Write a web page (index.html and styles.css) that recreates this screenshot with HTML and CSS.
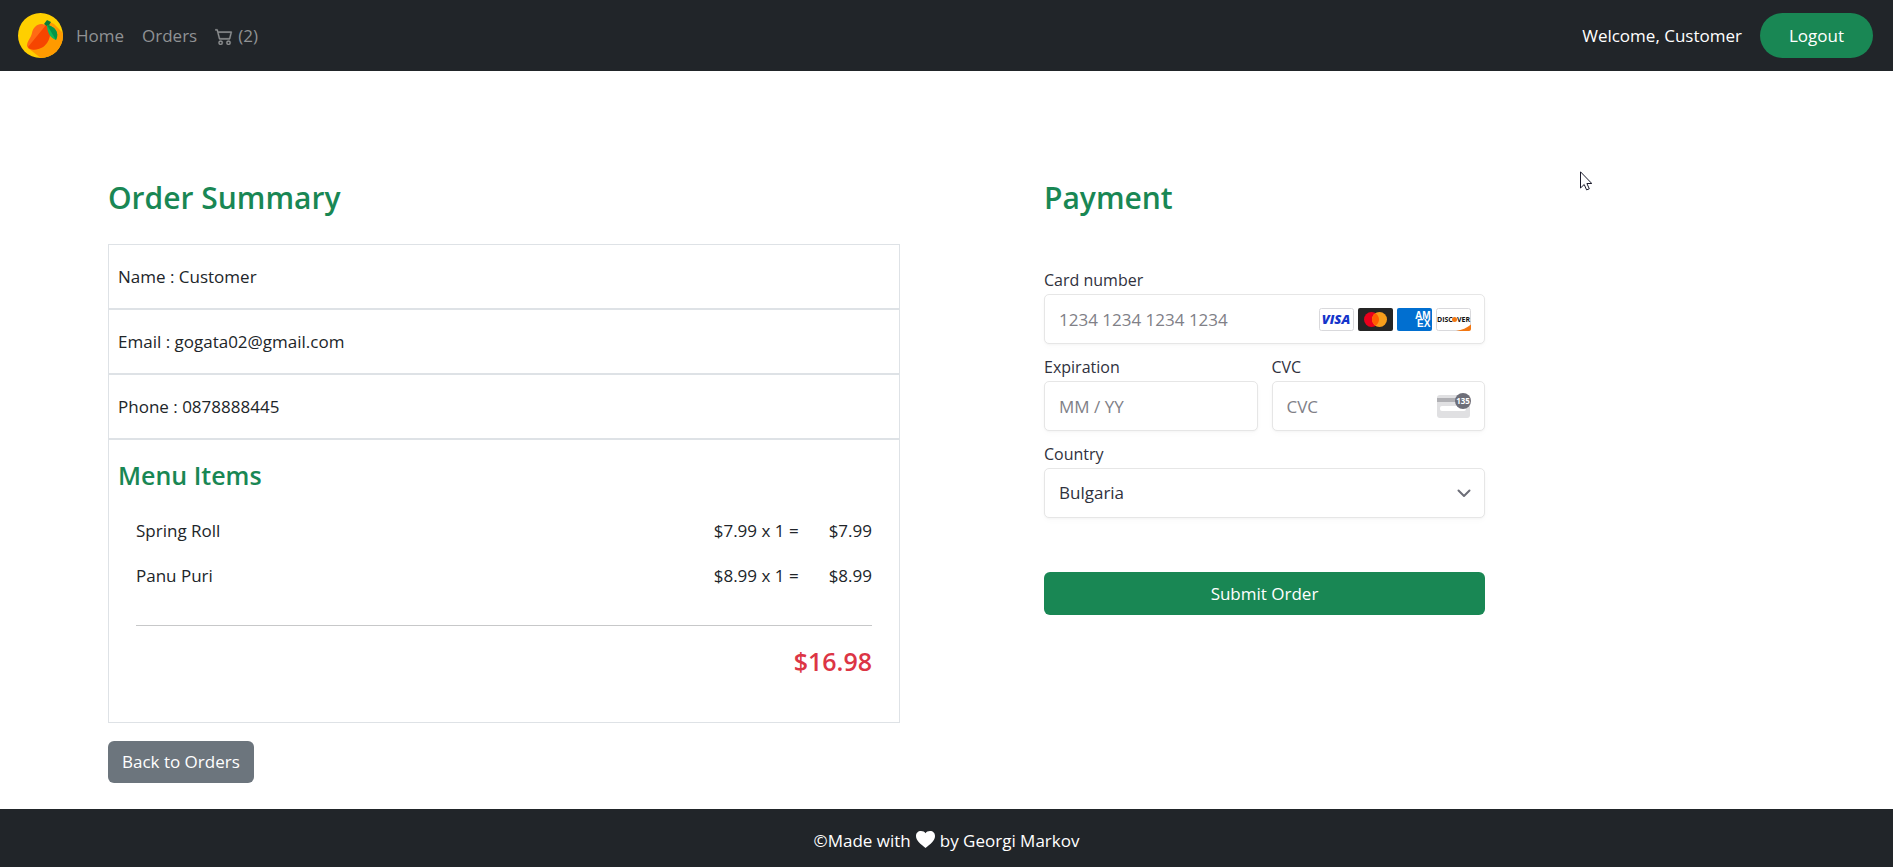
FILE: index.html
```html
<!DOCTYPE html>
<html lang="en">
<head>
<meta charset="utf-8">
<meta name="viewport" content="width=device-width, initial-scale=1">
<title>Order Summary</title>
<link rel="stylesheet" href="styles.css">
</head>
<body>
<header class="navbar">
  <nav class="nav-links">
    <a class="brand" href="#" aria-label="Mango home">
      <svg class="brand-logo" viewBox="0 0 45 45" aria-hidden="true">
        <defs><clipPath id="disc"><circle cx="22.500" cy="22.500" r="22.500"/></clipPath></defs>
        <g clip-path="url(#disc)">
          <rect width="45" height="45" fill="#ffcf00"/>
          <path d="M30 8 36 11 46 21V46H24L10 35Z" fill="#ff9a00"/>
          <path d="M27 12C21 9 15 14 14 20C13 25 9 28 9 33C10 38 20 37 25 34C31 30 37 17 27 12Z" fill="#ff6a14"/>
          <path d="M28 12 10 34C12 38 20 37 25 34C32 29 35 17 28 12Z" fill="#f64500"/>
          <path d="M29 7 33 9 30 14 26 11Z" fill="#0b7a3b"/>
          <path d="M29 12C36 13 42 19 38 27C32 25 29 19 29 12Z" fill="#12b857"/>
          <path d="M29 12C36 13 42 19 38 27Z" fill="#079447"/>
        </g>
      </svg>
    </a>
    <a class="nav-link" href="#">Home</a>
    <a class="nav-link" href="#">Orders</a>
    <a class="nav-link cart" href="#" aria-label="Cart (2)">
      <svg class="cart-icon" viewBox="0 0 16 16" fill="currentColor" stroke="currentColor" stroke-width=".3" aria-hidden="true"><path d="M0 2.500A.5.5 0 0 1 .5 2H2a.5.5 0 0 1 .485.379L2.890 4H14.500a.5.5 0 0 1 .485.621l-1.500 6A.5.5 0 0 1 13 11H4a.5.5 0 0 1-.485-.379L1.610 3H.5a.5.5 0 0 1-.5-.5M3.140 5l1.250 5h8.220l1.250-5zM5 13a1 1 0 1 0 0 2 1 1 0 0 0 0-2m-2 1a2 2 0 1 1 4 0 2 2 0 0 1-4 0m9-1a1 1 0 1 0 0 2 1 1 0 0 0 0-2m-2 1a2 2 0 1 1 4 0 2 2 0 0 1-4 0"/></svg>
      <span>(2)</span>
    </a>
  </nav>
  <div class="account">
    <span>Welcome, Customer</span>
    <button class="logout" type="button">Logout</button>
  </div>
</header>

<main class="checkout">
  <section>
    <h1 class="title">Order Summary</h1>
    <div class="panel detail">Name : Customer</div>
    <div class="panel detail">Email : gogata02@gmail.com</div>
    <div class="panel detail">Phone : 0878888445</div>
    <div class="panel menu">
      <h2 class="subtitle">Menu Items</h2>
      <div class="bill">
        <ul class="items">
          <li class="item"><span class="item-name">Spring Roll</span><span>$7.99 x 1 =</span><span class="amount">$7.99</span></li>
          <li class="item"><span class="item-name">Panu Puri</span><span>$8.99 x 1 =</span><span class="amount">$8.99</span></li>
        </ul>
        <hr class="rule">
        <p class="total">$16.98</p>
      </div>
    </div>
    <button class="btn back" type="button">Back to Orders</button>
  </section>

  <section>
    <h1 class="title">Payment</h1>
    <form class="payment">
      <div class="field wide">
        <label class="label" for="card">Card number</label>
        <div class="control">
          <input class="input" id="card" type="text" placeholder="1234 1234 1234 1234">
          <div class="badges">
            <svg class="badge" viewBox="0 0 35 23" aria-hidden="true">
              <rect x=".5" y=".5" width="34" height="22" rx="2" fill="#fff" stroke="#d9d9dc"/>
              <text class="visa" x="17" y="16" text-anchor="middle">VISA</text>
            </svg>
            <svg class="badge" viewBox="0 0 35 23" aria-hidden="true">
              <rect width="35" height="23" rx="2" fill="#252525"/>
              <circle cx="13.500" cy="11.500" r="7.500" fill="#eb001b"/>
              <circle cx="21.500" cy="11.500" r="7.500" fill="#f79e1b"/>
              <path d="M17.500 5.160a7.500 7.500 0 0 1 0 12.680a7.500 7.500 0 0 1 0-12.680Z" fill="#ff5f00"/>
            </svg>
            <svg class="badge" viewBox="0 0 35 23" aria-hidden="true">
              <rect width="35" height="23" rx="2" fill="#016fd0"/>
              <text class="amex" x="18" y="11">AM</text>
              <text class="amex" x="20" y="19">EX</text>
            </svg>
            <svg class="badge" viewBox="0 0 35 23" aria-hidden="true">
              <rect x=".5" y=".5" width="34" height="22" rx="2" fill="#fff" stroke="#d9d9dc"/>
              <path d="M20 23C26 22 31 20 35 16.500V21a2 2 0 0 1-2 2Z" fill="#f27712"/>
              <text class="discover" x="1" y="14">DISC</text>
              <circle cx="18.500" cy="11.500" r="2.500" fill="#f27712"/>
              <text class="discover" x="21" y="14">VER</text>
            </svg>
          </div>
        </div>
      </div>
      <div class="field">
        <label class="label" for="exp">Expiration</label>
        <input class="input" id="exp" type="text" placeholder="MM / YY">
      </div>
      <div class="field">
        <label class="label" for="cvc">CVC</label>
        <div class="control">
          <input class="input" id="cvc" type="text" placeholder="CVC">
          <div class="badges">
            <svg class="cvc-icon" viewBox="0 0 34 26" aria-hidden="true">
              <rect y="2" width="33" height="23" rx="3" fill="#e0e0e2"/>
              <rect y="5" width="33" height="4" fill="#b0b0b4"/>
              <rect x="3" y="13" width="26" height="5" rx="2" fill="#fff"/>
              <circle cx="26" cy="8" r="8" fill="#6d6e78"/>
              <text class="digits" x="26" y="11" text-anchor="middle">135</text>
            </svg>
          </div>
        </div>
      </div>
      <div class="field wide">
        <label class="label" for="country">Country</label>
        <div class="control">
          <select class="input" id="country"><option>Bulgaria</option></select>
          <div class="badges">
            <svg class="chevron" viewBox="0 0 14 9" fill="none" stroke="#6d6e78" stroke-width="2" stroke-linecap="round" stroke-linejoin="round" aria-hidden="true"><path d="M1.500 1.500 7 7l5.500-5.500"/></svg>
          </div>
        </div>
      </div>
      <button class="btn submit wide" type="submit">Submit Order</button>
    </form>
  </section>
</main>

<footer class="footer">
  <span>©Made with</span>
  <svg class="heart" viewBox="0 0 19 17" fill="#fff" role="img" aria-label="love"><path d="M9.500 17C4.500 13 0 9.500 0 5C0 2 2 0 5 0C7 0 8.700 .8 9.500 2.200C10.300 .8 12 0 14 0C17 0 19 2 19 5C19 9.500 14.500 13 9.500 17Z"/></svg>
  <span>by Georgi Markov</span>
</footer>

<svg class="pointer" viewBox="0 0 12 20" aria-hidden="true"><path d="M.5 .8V17l3.700-3.500 2.400 5.400 2.700-1.100-2.400-5.300h4.900Z" fill="#fff" stroke="#1b1b2b"/></svg>
</body>
</html>
```
FILE: styles.css
```css
* {
  box-sizing: border-box;
}

body {
  margin: 0;
  min-height: 100vh;
  display: flex;
  flex-direction: column;
  position: relative;
  background: #fff;
  color: #212529;
  font: 400 17px/26px "Open Sans", "Noto Sans", sans-serif;
}

button,
input,
select {
  font: inherit;
}

.navbar {
  display: flex;
  align-items: center;
  justify-content: space-between;
  padding: 13px 20px 13px 18px;
  background: #212529;
  color: #fff;
}

.nav-links,
.account {
  display: flex;
  align-items: center;
  gap: 18px;
}

.brand {
  display: flex;
  margin-right: -5px;
}

.brand-logo {
  width: 45px;
  height: 45px;
}

.nav-link {
  color: #909294;
  text-decoration: none;
}

.cart {
  display: flex;
  align-items: center;
  gap: 5px;
}

.cart-icon {
  width: 18px;
  height: 18px;
}

.logout {
  height: 45px;
  padding: 0 29px;
  border: 0;
  border-radius: 23px;
  background: #198754;
  color: #fff;
}

.checkout {
  display: grid;
  grid-template-columns: minmax(0, 792fr) minmax(0, 441fr);
  gap: 144px;
  width: 100%;
  max-width: 1593px;
  padding: 106px 108px 26px;
}

.title,
.subtitle {
  margin: 0;
  color: #198754;
  font-weight: 600;
}

.title {
  margin-bottom: 25px;
  font-size: 30px;
  line-height: 42px;
}

.subtitle {
  font-size: 25px;
  line-height: 32px;
}

.panel {
  border: 1px solid #dee2e6;
  padding: 0 9px;
}

.detail {
  padding: 19px 9px 18px;
}

.menu {
  padding-top: 19px;
}

.bill {
  padding: 18px 18px 45px;
}

.items {
  margin: 0;
  padding: 0;
  list-style: none;
}

.item {
  display: flex;
  padding: 9px 0 10px;
}

.item-name {
  flex: 1;
}

.amount {
  padding-left: 30px;
}

.rule {
  margin: 26px 0 19px;
  border: 0;
  border-top: 1px solid #c7c8c9;
}

.total {
  margin: 0;
  color: #dc3545;
  font-size: 25px;
  font-weight: 600;
  line-height: 32px;
  text-align: right;
}

.btn {
  border: 0;
  border-radius: 6px;
  color: #fff;
}

.back {
  height: 42px;
  margin-top: 18px;
  padding: 0 14px;
  background: #6c757d;
}

.payment {
  display: grid;
  grid-template-columns: 1fr 1fr;
  gap: 12px 14px;
  padding-top: 25px;
}

.wide {
  grid-column: 1 / -1;
}

.label {
  display: block;
  margin-bottom: 3px;
  color: #30313d;
  font-size: 16px;
  line-height: 22px;
}

.control {
  position: relative;
}

.input {
  display: block;
  width: 100%;
  height: 50px;
  padding: 0 14px;
  border: 1px solid #e6e6e6;
  border-radius: 5px;
  background: #fff;
  box-shadow: 0 1px 2px rgba(0, 0, 0, 0.03), 0 3px 6px rgba(0, 0, 0, 0.02);
  color: #30313d;
  appearance: none;
}

.input::placeholder {
  color: #808087;
  opacity: 1;
}

.badges {
  position: absolute;
  top: 0;
  right: 14px;
  height: 100%;
  display: flex;
  align-items: center;
  gap: 4px;
  pointer-events: none;
}

.badge {
  width: 35px;
  height: 23px;
}

.visa {
  fill: #1434cb;
  font: italic 800 13px "Open Sans", sans-serif;
}

.amex {
  fill: #fff;
  font: 700 10px "Liberation Sans", sans-serif;
}

.discover {
  fill: #111;
  font: 700 7px "Open Sans", sans-serif;
}

.digits {
  fill: #fff;
  font: 700 8px "Open Sans", sans-serif;
}

.cvc-icon {
  width: 34px;
  height: 26px;
}

.chevron {
  width: 14px;
  height: 9px;
}

.submit {
  height: 43px;
  margin-top: 42px;
  background: #198754;
}

.footer {
  display: flex;
  justify-content: center;
  gap: 5px;
  margin-top: auto;
  padding: 19px 0 13px;
  background: #212529;
  color: #fff;
}

.heart {
  width: 19px;
  height: 17px;
  margin-top: 3px;
}

.pointer {
  position: absolute;
  top: 171px;
  left: 1580px;
  width: 12px;
  height: 20px;
}
```
